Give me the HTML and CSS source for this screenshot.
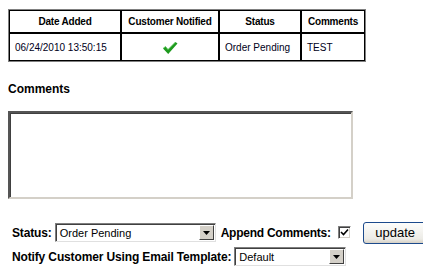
FILE: index.html
```html
<!DOCTYPE html>
<html>
<head>
<meta charset="utf-8">
<link rel="stylesheet" href="styles.css">
</head>
<body>
<table class="hist">
  <tr>
    <th class="c1">Date Added</th>
    <th class="c2">Customer Notified</th>
    <th class="c3">Status</th>
    <th class="c4">Comments</th>
  </tr>
  <tr>
    <td>06/24/2010 13:50:15</td>
    <td class="center"><svg class="tick" width="16" height="14" viewBox="0 0 16 14"><path d="M1 7.5 L3.5 5.5 L6 8.5 L13.5 1 L15.5 2.5 L6.2 13 Z" fill="#1e9a1e"/><path d="M1 7.5 L3.5 5.5 L6 8.5 L13.5 1" fill="none" stroke="#5cc85c" stroke-width="0.8"/></svg></td>
    <td>Order Pending</td>
    <td>TEST</td>
  </tr>
</table>

<div class="heading">Comments</div>
<div class="ta"></div>

<div class="row1">
  <span class="lbl">Status:</span>
  <span class="sel sel1"><span class="val">Order Pending</span><span class="arr"><svg width="7" height="4" viewBox="0 0 7 4"><path d="M0 0H7L3.5 4Z" fill="#000"/></svg></span></span>
  <span class="lbl append">Append Comments:</span>
  <span class="cb"><svg width="9" height="9" viewBox="0 0 9 9"><path d="M1 4 L3.5 6.5 L8 1.5" fill="none" stroke="#000" stroke-width="1.6"/></svg></span>
  <span class="btn">update</span>
</div>
<div class="row2">
  <span class="lbl">Notify Customer Using Email Template:</span>
  <span class="sel sel2"><span class="val">Default</span><span class="arr"><svg width="7" height="4" viewBox="0 0 7 4"><path d="M0 0H7L3.5 4Z" fill="#000"/></svg></span></span>
</div>
</body>
</html>
```
FILE: styles.css
```css
body {
  margin: 8px;
  font-family: "Liberation Sans", Arial, sans-serif;
  background: #fff;
  color: #000;
}
.hist {
  margin-top: 1px;
  border-collapse: separate;
  border-spacing: 0;
  border: 1px solid #808080;
  font-size: 10px;
  table-layout: fixed;
  width: 356px;
}
.hist th, .hist td {
  border: 1px solid #000;
  padding: 0 5px;
  white-space: nowrap;
}
.hist th {
  height: 21px;
  padding: 0;
  text-align: center;
  font-weight: bold;
  letter-spacing: -0.2px;
}
.hist td {
  height: 26px;
  text-align: left;
  color: #000020;
}
.hist td.center { text-align: center; }
.tick { display: block; margin: 1px auto 0; }
.c1 { width: 110px; }
.c2 { width: 96px; }
.c3 { width: 80px; }
.c4 { width: 62px; }

.heading {
  margin-top: 20px;
  font-size: 12px;
  font-weight: bold;
  line-height: 14px;
}
.ta {
  margin-top: 15px;
  width: 341px;
  height: 84px;
  border-style: solid;
  border-width: 2px;
  border-color: #555 #d4d0c8 #d4d0c8 #555;
  box-shadow: inset 1px 1px 0 #404040;
}
.row1 {
  margin-top: 22px;
  display: flex;
  align-items: center;
  height: 23px;
  padding-left: 4px;
}
.row2 {
  margin-top: 3px;
  display: flex;
  align-items: center;
  height: 19px;
  padding-left: 4px;
}
.row1 > *, .row2 > * { flex: none; }
.lbl {
  font-size: 12px;
  font-weight: bold;
  white-space: nowrap;
  letter-spacing: -0.14px;
}
.sel {
  display: flex;
  align-items: stretch;
  box-sizing: border-box;
  height: 19px;
  border: 1px solid #7f7f7f;
  border-right-color: #e0e0e0;
  border-bottom-color: #e0e0e0;
  box-shadow: inset 1px 1px 0 #404040;
  background: #fff;
  font-size: 11px;
  margin-left: 3px;
}
.sel1 { width: 161px; }
.sel2 { width: 112px; }
.sel .val {
  flex: 1;
  padding: 2px 0 0 4px;
  line-height: 14px;
}
.sel .arr {
  width: 15px;
  margin: 1px 1px 1px 0;
  background: #d4d0c8;
  border: 1px solid;
  border-color: #fff #404040 #404040 #fff;
  box-sizing: border-box;
  display: flex;
  align-items: center;
  justify-content: center;
}
.append { margin-left: 5px; letter-spacing: -0.25px; }
.cb {
  margin-left: 7px;
  width: 13px;
  height: 13px;
  box-sizing: border-box;
  border: 1px solid;
  border-color: #808080 #fff #fff #808080;
  box-shadow: inset 1px 1px 0 #404040, inset -1px -1px 0 #d4d0c8;
  background: #fff;
  display: flex;
  align-items: center;
  justify-content: center;
}
.btn {
  margin-left: 12px;
  width: 65px;
  height: 22px;
  box-sizing: border-box;
  border: 1px solid #1c4a8c;
  border-radius: 3px;
  background: linear-gradient(#fdfdfb, #ecebe6 80%, #d6d0c5);
  font-size: 13px;
  line-height: 18px;
  text-align: center;
  display: flex;
  align-items: center;
  justify-content: center;
}
```
